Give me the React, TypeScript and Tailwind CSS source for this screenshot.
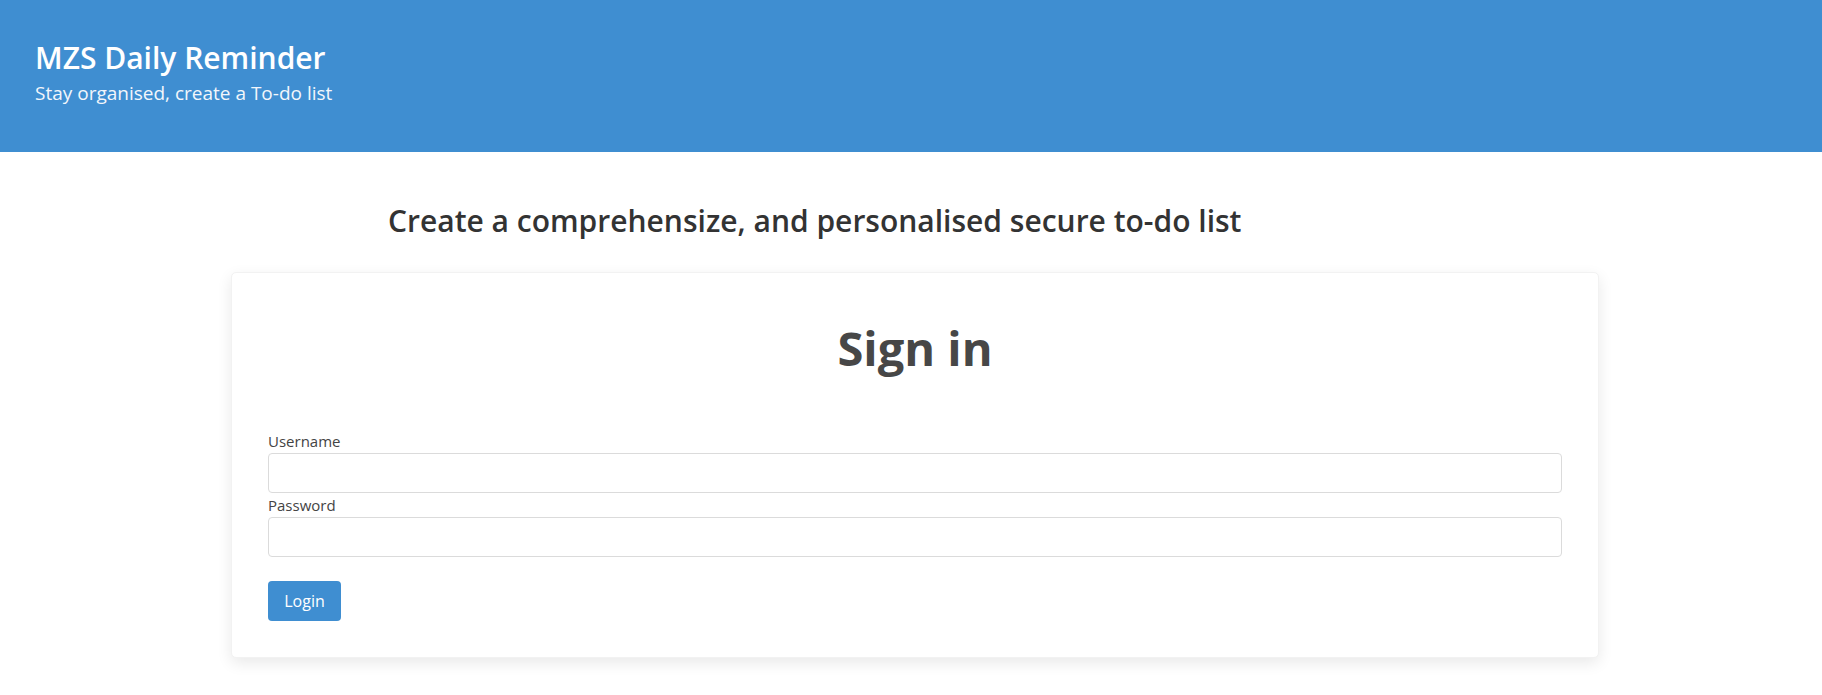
const font = { fontFamily: '"Open Sans", "Noto Sans", sans-serif' };

const Field = ({ label, type }: { label: string; type: string }) => (
  <div className="flex flex-col">
    <label className="text-[15px] leading-[24px] text-[#444]">{label}</label>
    <input
      type={type}
      className="h-[40px] w-full rounded-[4px] border border-[#dbdbdb] bg-white px-3 outline-none"
    />
  </div>
);

const App = () => {
  return (
    <div className="min-h-screen bg-white" style={font}>
      {/* Header */}
      <header className="h-[152px] bg-[#3f8ed1] pl-[35px] pt-[40px]">
        <h1 className="text-[30px] leading-[36px] font-semibold text-white">MZS Daily Reminder</h1>
        <p className="mt-[5px] text-[19px] leading-[24px] text-[#f2f6fb]">
          Stay organised, create a To-do list
        </p>
      </header>

      <main className="pb-10">
        <h2 className="mt-[51px] pl-[388px] text-[30px] leading-[36px] font-semibold text-[#333]">
          Create a comprehensize, and personalised secure to-do list
        </h2>

        {/* Sign in card */}
        <div className="mt-[33px] ml-[231px] w-[1368px] rounded-[5px] border border-[#f2f2f2] bg-white px-[36px] pt-[47px] pb-[36px] shadow-[0_5px_15px_rgba(0,0,0,0.09)]">
          <h3 className="text-center text-[47px] leading-[56px] font-bold text-[#474747]">Sign in</h3>

          <form className="mt-[53px] flex flex-col" onSubmit={(e) => e.preventDefault()}>
            <Field label="Username" type="text" />
            <Field label="Password" type="password" />
            <div className="mt-[24px]">
              <button
                type="submit"
                className="h-[40px] w-[73px] rounded-[4px] bg-[#3f8ed1] text-[16px] text-white"
              >
                Login
              </button>
            </div>
          </form>
        </div>
      </main>
    </div>
  );
};

export default App;
